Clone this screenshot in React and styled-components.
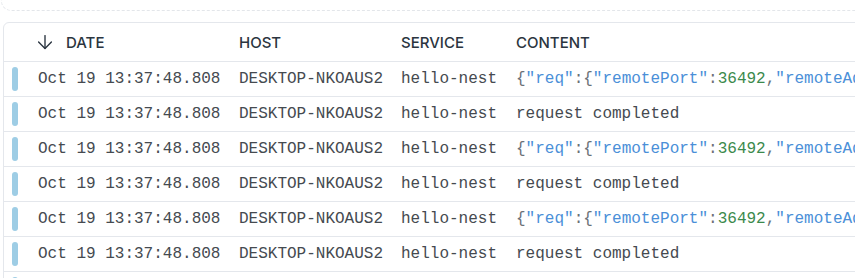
import styled, { createGlobalStyle } from 'styled-components';
import { ArrowDown } from 'lucide-react';

const GlobalStyle = createGlobalStyle`
	body {
		margin: 0;
		background: #ffffff;
		overflow: hidden;
		font-family: Inter, "Noto Sans", sans-serif;
	}
`

const rows = [
	{ json: true },
	{ json: false },
	{ json: true },
	{ json: false },
	{ json: true },
	{ json: false },
	{ json: true },
];

const JsonContent = () => (
	<>
		<Punct>{'{'}</Punct>
		<Str>"req"</Str>
		<Punct>:{'{'}</Punct>
		<Str>"remotePort"</Str>
		<Punct>:</Punct>
		<Num>36492</Num>
		<Punct>,</Punct>
		<Str>"remoteAddress"</Str>
		<Punct>:</Punct>
		<Str>"::1"</Str>
		<Punct>{'}}'}</Punct>
	</>
);

const App = () => {
	return (
		<Page>
			<GlobalStyle />
			<DashedBox />
			<Card>
				<HeaderRow>
					<Cell />
					<HeadCell>
						<ArrowDown size={22} strokeWidth={1.5} />
						<span>Date</span>
					</HeadCell>
					<HeadCell>Host</HeadCell>
					<HeadCell>Service</HeadCell>
					<HeadCell>Content</HeadCell>
				</HeaderRow>
				{rows.map((row, i) => (
					<Row key={i}>
						<Cell>
							<Level />
						</Cell>
						<Cell>Oct 19 13:37:48.808</Cell>
						<Cell>DESKTOP-NKOAUS2</Cell>
						<Cell>hello-nest</Cell>
						<Cell>{row.json ? <JsonContent /> : 'request completed'}</Cell>
					</Row>
				))}
			</Card>
		</Page>
	);
};

const Page = styled.div`
	width: 1300px;
	padding-left: 3px;
`

const DashedBox = styled.div`
	height: 40px;
	margin-top: -30px;
	margin-left: -2px;
	border: 1px dashed #e3e6ea;
	border-top: none;
	border-radius: 0 0 10px 10px;
`

const Card = styled.div`
	margin-top: 11px;
	border: 1px solid #e4e7ec;
	border-radius: 6px;
	overflow: hidden;
`

const columns = `34px 201px 162px 115px 1fr`;

const HeaderRow = styled.div`
	display: grid;
	grid-template-columns: ${columns};
	height: 38px;
	align-items: center;
	border-bottom: 1px solid #e4e7ec;
`

const HeadCell = styled.div`
	display: flex;
	align-items: center;
	gap: 10px;
	font-family: Inter, "Noto Sans", sans-serif;
	font-size: 15px;
	font-weight: 500;
	text-transform: uppercase;
	color: #2b3540;

	svg {
		margin-left: -4px;
		color: #2b3540;
	}
`

const Row = styled.div`
	display: grid;
	grid-template-columns: ${columns};
	height: 34px;
	align-items: center;
	border-bottom: 1px solid #e4e7ec;
	font-family: "Liberation Mono", "DejaVu Sans Mono", monospace;
	font-size: 16px;
	color: #454a50;
`

const Cell = styled.div`
	display: flex;
	align-items: center;
	white-space: pre;
`

const Level = styled.div`
	width: 6px;
	height: 24px;
	margin-left: 8px;
	border-radius: 3px;
	background: #9ecde5;
`

const Punct = styled.span`
	color: #6b7077;
`

const Str = styled.span`
	color: #4a8fd8;
`

const Num = styled.span`
	color: #3b8a4c;
`

export default App
